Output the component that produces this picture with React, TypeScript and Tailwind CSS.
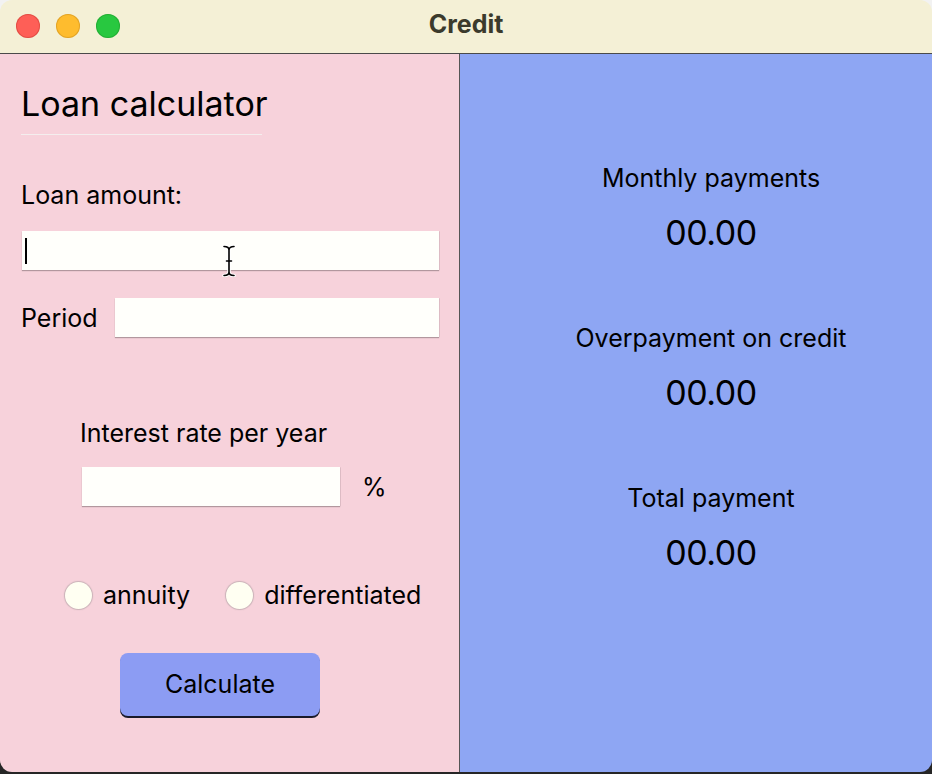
import React from "react";

function Field({ className = "", cursor = false }: { className?: string; cursor?: boolean }) {
  return (
    <div className={`relative h-[39px] bg-[#fffffb] shadow-[0_1px_1px_rgba(0,0,0,0.28),1px_0_0_rgba(0,0,0,0.06)] ${className}`}>
      {cursor && <div className="absolute left-[3px] top-[7px] h-[26px] w-[2px] bg-black" />}
      {cursor && (
        <svg className="absolute left-[200px] top-[14px]" width="14" height="32" viewBox="0 0 14 32">
          <path
            d="M2 1.5 C5 1.5 7 3 7 5 C7 3 9 1.5 12 1.5 M7 5 L7 27 M4.5 16 L9.5 16 M2 30.5 C5 30.5 7 29 7 27 C7 29 9 30.5 12 30.5"
            fill="none"
            stroke="#fff"
            strokeWidth="3.5"
            strokeLinecap="round"
          />
          <path
            d="M2 1.5 C5 1.5 7 3 7 5 C7 3 9 1.5 12 1.5 M7 5 L7 27 M4.5 16 L9.5 16 M2 30.5 C5 30.5 7 29 7 27 C7 29 9 30.5 12 30.5"
            fill="none"
            stroke="#000"
            strokeWidth="1.6"
            strokeLinecap="round"
          />
        </svg>
      )}
    </div>
  );
}

function Radio({ label }: { label: string }) {
  return (
    <div className="flex items-center gap-[11px]">
      <div className="h-[27px] w-[27px] rounded-full bg-[#fffff2] shadow-[0_0_1px_1px_rgba(120,120,120,0.35)]" />
      <span className="text-[25px] leading-[30px]">{label}</span>
    </div>
  );
}

function Result({ label, first = false }: { label: string; first?: boolean }) {
  return (
    <div className={`flex flex-col items-center ${first ? "" : "mt-[70px]"}`}>
      <div className="text-[25px] leading-[30px]">{label}</div>
      <div className="mt-[20px] text-[34px] leading-[40px] tracking-[-0.5px]">00.00</div>
    </div>
  );
}

export default function App() {
  return (
    <div
      className="h-[774px] w-[932px] bg-[linear-gradient(to_bottom,#f2f2f2_50%,#262626_50%)] text-black"
      style={{ fontFamily: "Inter, 'Noto Sans', sans-serif" }}
    >
      <div className="flex h-[772px] w-[932px] flex-col overflow-hidden rounded-[12px]">
        {/* title bar */}
        <div className="relative flex h-[54px] shrink-0 items-center justify-center border-b border-[#4a4a4a] bg-[#f4f0d6]">
          <div className="absolute left-[16px] top-[14px] flex gap-[16px]">
            <div className="h-[24px] w-[24px] rounded-full bg-[#fe5f57] shadow-[inset_0_0_0_1px_rgba(200,60,50,0.5)]" />
            <div className="h-[24px] w-[24px] rounded-full bg-[#febc2e] shadow-[inset_0_0_0_1px_rgba(200,140,30,0.5)]" />
            <div className="h-[24px] w-[24px] rounded-full bg-[#28c840] shadow-[inset_0_0_0_1px_rgba(30,150,40,0.5)]" />
          </div>
          <span className="mb-[4px] text-[25px] font-bold text-[#3b3a2c]">Credit</span>
        </div>
        {/* body */}
        <div className="flex flex-1">
          {/* left */}
          <div className="flex w-[460px] flex-col border-r border-[#555] bg-[#f7d2db] pl-[21px] pr-[20px]">
            <div className="pt-[30px] text-[34px] leading-[40px]">Loan calculator</div>
            <div className="mt-[10px] h-px w-[241px] bg-[#f4eeee]" />
            <div className="mt-[45px] text-[25px] leading-[30px]">Loan amount:</div>
            <Field className="ml-px mt-[21px]" cursor />
            <div className="mt-[28px] flex items-center">
              <span className="text-[25px] leading-[30px]">Period</span>
              <Field className="ml-auto w-[324px]" />
            </div>
            <div className="ml-[59px] mt-[81px] text-[25px] leading-[30px]">Interest rate per year</div>
            <div className="ml-[61px] mt-[19px] flex items-center">
              <Field className="w-[258px]" />
              <span className="ml-[22px] text-[25px] leading-[30px]">%</span>
            </div>
            <div className="ml-[44px] mt-[74px] flex items-center gap-[36px]">
              <Radio label="annuity" />
              <Radio label="differentiated" />
            </div>
            <div className="ml-[99px] mt-[43px] flex h-[63px] w-[200px] items-center justify-center rounded-[8px] bg-[#8c9cf3] text-[25px] shadow-[0_2px_0_#1a1a2a]">
              Calculate
            </div>
          </div>
          {/* right */}
          <div className="flex flex-1 flex-col items-center bg-[#8ea6f3] pl-[30px] pt-[109px]">
            <Result label="Monthly payments" first />
            <Result label="Overpayment on credit" />
            <Result label="Total payment" />
          </div>
        </div>
      </div>
    </div>
  );
}
